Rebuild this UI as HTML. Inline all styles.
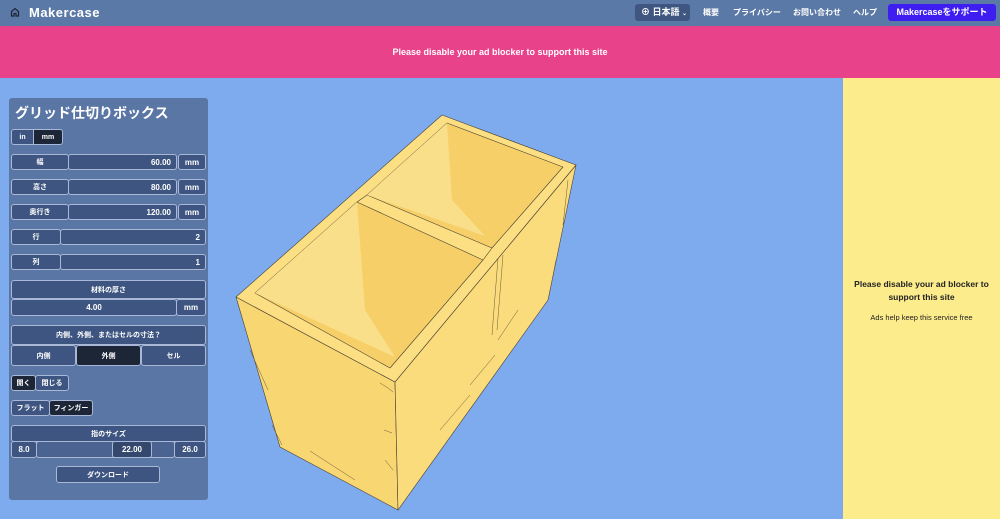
<!DOCTYPE html>
<html><head><meta charset="utf-8"><style>
*{box-sizing:border-box;margin:0;padding:0}
body{width:1000px;height:519px;overflow:hidden;background:#7eaaee;font-family:"Liberation Sans","Noto Sans CJK JP",sans-serif;position:relative;color:#fff}
.a{position:absolute}
.nav{left:0;top:0;width:1000px;height:26px;background:#5b79a6}
.pink{left:0;top:26px;width:1000px;height:52px;background:#e8428a;text-align:center;font-size:9px;font-weight:bold;line-height:52px}
.ad{left:843px;top:78px;width:157px;height:441px;background:#fcec8c;color:#222;text-align:center}
.panel{left:9px;top:98px;width:199px;height:402px;background:#5a76a4;border-radius:3px}
.b{position:absolute;background:#3d5580;border:1px solid #a8b8d6;border-radius:3px;font-size:7px;font-weight:bold;display:flex;align-items:center;justify-content:center}
.d{background:#1d2637}
.r{justify-content:flex-end;padding-right:5px;font-size:8px}
.ni{font-size:8px;font-weight:bold;top:7px}
</style></head><body>
<div class="a nav">
 <svg class="a" style="left:10px;top:7px" width="10" height="10" viewBox="0 0 10 10"><path d="M1.5 9V4.5L5 1.5 8.5 4.5V9H6V6.5H4V9Z" fill="none" stroke="#1d2637" stroke-width="1.2"/></svg>
 <div class="a" style="left:29px;top:5px;font-size:13px;font-weight:bold;letter-spacing:0.5px">Makercase</div>
 <div class="a" style="left:635px;top:4px;width:55px;height:17px;background:#3e5680;border-radius:3px;font-size:9px;font-weight:bold;line-height:17px;padding-left:6px">⊕ 日本語 <span style="font-size:6px">⌄</span></div>
 <div class="a ni" style="left:703px">概要</div>
 <div class="a ni" style="left:733px">プライバシー</div>
 <div class="a ni" style="left:793px">お問い合わせ</div>
 <div class="a ni" style="left:853px">ヘルプ</div>
 <div class="a" style="left:888px;top:4px;width:108px;height:17px;background:#3e1df0;border-radius:3px;font-size:9px;font-weight:bold;line-height:17px;text-align:center">Makercaseをサポート</div>
</div>
<div class="a pink">Please disable your ad blocker to support this site</div>
<div class="a ad"><div style="margin-top:200px;font-size:8.5px;font-weight:bold;line-height:13px">Please disable your ad blocker to<br>support this site</div><div style="margin-top:9px;font-size:7.5px">Ads help keep this service free</div></div>

<svg class="a" style="left:0;top:0" width="843" height="519" viewBox="0 0 843 519">
 <g stroke="#4a4030" stroke-width="0.6" stroke-linejoin="round">
 <polygon points="236,297 395,382 398,510 280,447" fill="#f8d773"/>
 <polygon points="395,382 576,165 548,300 398,510" fill="#fadc7c"/>
 <polygon points="236,297 442,115 576,165 395,382" fill="#fbdf82"/>
 <polygon points="255,293 357,202 483,260 390,368" fill="#f6cf68"/>
 <polygon points="255,293 357,202 365,310 395,357" fill="#fadf8a" stroke="none"/>
 <polygon points="367,195 447,123 563,167 492,248" fill="#f6cf68"/>
 <polygon points="367,195 447,123 452,200 485,236" fill="#fadf8a" stroke="none"/>
 <path d="M357,202 L367,195 M483,260 L492,248" fill="none"/>
 </g>
 <g fill="none" stroke="#6a5a38" stroke-width="0.5">
 <path d="M498,258 L492,335 M503,255 L497,330"/>
 <path d="M568,180 L563,225 M556,260 L549,296"/>
 <path d="M250,350 L268,390 M272,425 L282,445 M310,451 L355,480"/>
 <path d="M380,383 L388,388 L393,392 M384,430 L392,433 M385,460 L393,470"/>
 <path d="M498,340 L518,310 M470,385 L495,355 M440,430 L470,395"/>
 </g>
</svg>

<div class="a panel">
 <div class="a" style="left:6px;top:5px;font-size:14px;font-weight:bold">グリッド仕切りボックス</div>
 <div class="b" style="left:2px;top:31px;width:23px;height:16px;border-radius:3px 0 0 3px">in</div>
 <div class="b d" style="left:24px;top:31px;width:30px;height:16px;border-radius:0 3px 3px 0">mm</div>

 <div class="b" style="left:2px;top:56px;width:58px;height:16px">幅</div>
 <div class="b r" style="left:59px;top:56px;width:109px;height:16px">60.00</div>
 <div class="b" style="left:169px;top:56px;width:28px;height:16px;font-size:8px">mm</div>
 <div class="b" style="left:2px;top:81px;width:58px;height:16px">高さ</div>
 <div class="b r" style="left:59px;top:81px;width:109px;height:16px">80.00</div>
 <div class="b" style="left:169px;top:81px;width:28px;height:16px;font-size:8px">mm</div>
 <div class="b" style="left:2px;top:106px;width:58px;height:16px">奥行き</div>
 <div class="b r" style="left:59px;top:106px;width:109px;height:16px">120.00</div>
 <div class="b" style="left:169px;top:106px;width:28px;height:16px;font-size:8px">mm</div>
 <div class="b" style="left:2px;top:131px;width:50px;height:16px">行</div>
 <div class="b r" style="left:51px;top:131px;width:146px;height:16px">2</div>
 <div class="b" style="left:2px;top:156px;width:50px;height:16px">列</div>
 <div class="b r" style="left:51px;top:156px;width:146px;height:16px">1</div>

 <div class="b" style="left:2px;top:182px;width:195px;height:19px">材料の厚さ</div>
 <div class="b" style="left:2px;top:201px;width:166px;height:17px;font-size:8px">4.00</div>
 <div class="b" style="left:167px;top:201px;width:30px;height:17px;font-size:8px">mm</div>

 <div class="b" style="left:2px;top:227px;width:195px;height:20px">内側、外側、またはセルの寸法？</div>
 <div class="b" style="left:2px;top:247px;width:65px;height:21px">内側</div>
 <div class="b d" style="left:67px;top:247px;width:65px;height:21px">外側</div>
 <div class="b" style="left:132px;top:247px;width:65px;height:21px">セル</div>

 <div class="b d" style="left:2px;top:277px;width:25px;height:16px">開く</div>
 <div class="b" style="left:26px;top:277px;width:34px;height:16px">閉じる</div>
 <div class="b" style="left:2px;top:302px;width:39px;height:16px">フラット</div>
 <div class="b d" style="left:40px;top:302px;width:44px;height:16px">フィンガー</div>

 <div class="b" style="left:2px;top:327px;width:195px;height:17px">指のサイズ</div>
 <div class="b" style="left:2px;top:343px;width:26px;height:17px;font-size:8px">8.0</div>
 <div class="b" style="left:27px;top:343px;width:139px;height:17px;background:#4a6390"></div>
 <div class="b" style="left:103px;top:343px;width:40px;height:17px;background:#34486e;font-size:8px">22.00</div>
 <div class="b" style="left:165px;top:343px;width:32px;height:17px;font-size:8px">26.0</div>

 <div class="b" style="left:47px;top:368px;width:104px;height:17px">ダウンロード</div>
</div>
</body></html>
